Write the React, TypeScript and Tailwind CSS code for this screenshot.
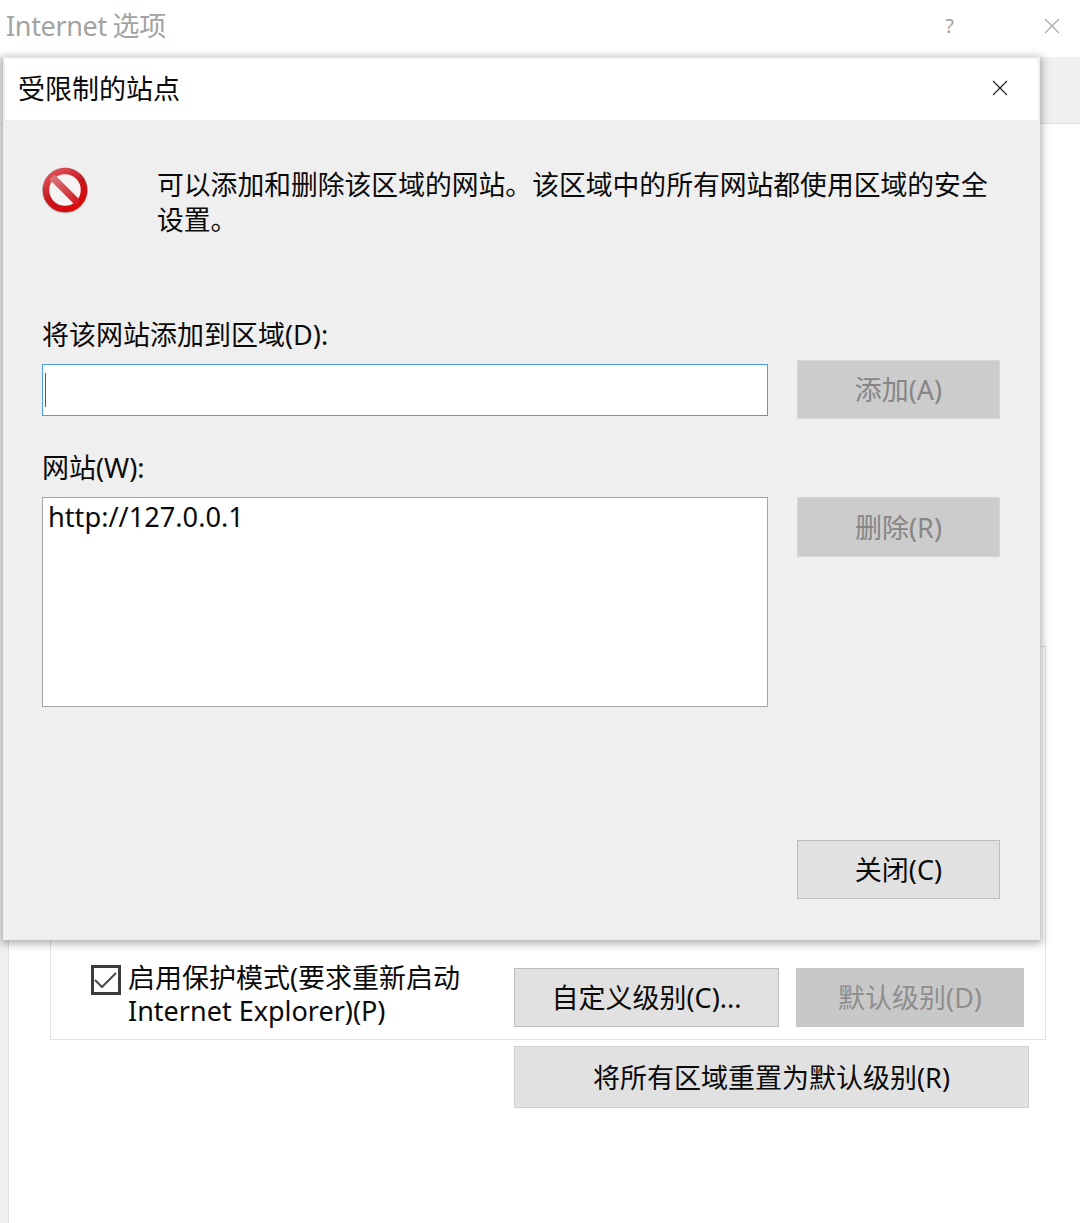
import React from 'react';

const font = '[font-family:"Noto_Sans","Noto_Sans_CJK_SC",sans-serif]';

// Flat Win10 dialog button, disabled variant is darker grey with muted text
const DlgButton: React.FC<{ label: string; disabled?: boolean; className?: string }> = ({ label, disabled, className }) => (
  <div
    className={`flex items-center justify-center border pt-[2px] text-[27px] ${
      disabled
        ? 'border-[#d6d6d6] bg-[#cccccc] text-[#868686]'
        : 'border-[#bdbdbd] bg-[#e1e1e1] text-[#0a0a0a]'
    } ${className ?? ''}`}
  >
    {label}
  </div>
);

const CloseIcon: React.FC<{ size: number; color: string; className?: string }> = ({ size, color, className }) => (
  <svg className={className} width={size} height={size} viewBox="0 0 16 16" fill="none" stroke={color} strokeWidth="1.1">
    <path d="M1 1 L15 15 M15 1 L1 15" />
  </svg>
);

const BlockedIcon: React.FC = () => (
  <svg width="48" height="48" viewBox="0 0 48 48">
    <defs>
      <linearGradient id="ring" x1="0.2" y1="0" x2="0.8" y2="1">
        <stop offset="0" stopColor="#de5056" />
        <stop offset="0.5" stopColor="#c4181f" />
        <stop offset="1" stopColor="#dc0808" />
      </linearGradient>
      <linearGradient id="bar" x1="0" y1="0" x2="1" y2="1">
        <stop offset="0" stopColor="#d9777c" />
        <stop offset="1" stopColor="#cf1a1e" />
      </linearGradient>
    </defs>
    <circle cx="24" cy="24.5" r="23" fill="#8c8c8c" opacity="0.55" />
    <circle cx="24" cy="24" r="19" fill="#f4f4f4" stroke="url(#ring)" strokeWidth="6.5" />
    <path d="M11 11 L37 37" stroke="url(#bar)" strokeWidth="7" />
  </svg>
);

export default function App() {
  return (
    <div className={`relative flex h-[1223px] w-[1080px] flex-col overflow-hidden bg-white ${font}`}>
      {/* Parent window behind the dialog */}
      <div className="flex h-[57px] items-center justify-between pb-[5px] pl-[6px] pr-[20px]">
        <span className="text-[27px] tracking-[-0.35px] text-[#a3a3a3] [word-spacing:-1px]">Internet 选项</span>
        <div className="flex items-center gap-[90px]">
          <span className="text-[20px] text-[#a0a0a0]">?</span>
          <CloseIcon size={16} color="#a8a8a8" />
        </div>
      </div>
      <div className="h-[67px] border-b border-[#dedede] bg-[#f0f0f0]" />
      <div className="flex flex-1">
        <div className="w-[9px] border-r border-[#e0e0e0] bg-[#f0f0f0]" />
        <div className="flex flex-col pl-[41px] pt-[522px]">
          <div className="flex h-[394px] w-[996px] flex-col justify-end border border-[#e3e3e3] pb-[12px] pl-[40px] pr-[21px]">
            <div className="flex justify-between">
              <div className="flex w-[420px] text-[27px] leading-[33px] text-[#0a0a0a]">
                <div className="mr-[7px] mt-[5px] flex h-[30px] w-[30px] shrink-0 items-center justify-center border-[3px] border-[#3c3c3c] bg-white">
                  <svg width="24" height="24" viewBox="0 0 24 24" fill="none" stroke="#4a4a4a" strokeWidth="2">
                    <path d="M1 12 L8 19 L22 5" />
                  </svg>
                </div>
                <div className="mt-[1px] whitespace-nowrap">
                  启用保护模式(要求重新启动
                  <br />
                  Internet Explorer)(P)
                </div>
              </div>
              <div className="mt-[8px] flex gap-[17px]">
                <DlgButton label="自定义级别(C)..." className="h-[59px] w-[265px]" />
                <DlgButton label="默认级别(D)" disabled className="h-[59px] w-[228px] !border-[#c8c8c8] !bg-[#c8c8c8] !text-[#8e8e8e]" />
              </div>
            </div>
          </div>
          <DlgButton label="将所有区域重置为默认级别(R)" className="ml-[464px] mt-[6px] h-[62px] w-[515px] !border-[#d0d0d0]" />
        </div>
      </div>

      {/* Modal dialog on top */}
      <div className="absolute left-[3px] top-[57px] flex h-[883px] w-[1037px] flex-col bg-[#efefef] shadow-[0_2px_8px_2px_rgba(0,0,0,0.3)]">
        <div className="mx-[2px] mt-[2px] flex h-[61px] shrink-0 items-center justify-between bg-white pl-[13px] pr-[30px]">
          <span className="text-[27px] text-[#0a0a0a]">受限制的站点</span>
          <CloseIcon size={16} color="#1a1a1a" className="mb-[3px]" />
        </div>
        <div className="flex flex-1 flex-col pl-[39px] pr-[40px] text-[#0a0a0a]">
          <div className="mt-[47px] flex">
            <div className="ml-[-1px] mt-[-1px] w-[116px] shrink-0">
              <BlockedIcon />
            </div>
            <p className="w-[840px] text-[26.8px] leading-[35px]">
              可以添加和删除该区域的网站。该区域中的所有网站都使用区域的安全设置。
            </p>
          </div>
          <div className="mt-[80px] text-[27px] leading-[35px]">将该网站添加到区域(D):</div>
          <div className="mt-[8px] flex items-start justify-between">
            <div className="mt-[4px] flex h-[52px] w-[726px] items-center border border-[#4a9ee0] bg-white pl-[2px]">
              <div className="h-[34px] w-px bg-[#555555]" />
            </div>
            <DlgButton label="添加(A)" disabled className="h-[59px] w-[203px]" />
          </div>
          <div className="mt-[31px] text-[27px] leading-[35px]">网站(W):</div>
          <div className="mt-[12px] flex items-start justify-between">
            <div className="h-[210px] w-[726px] border border-[#a6a6a6] bg-white pl-[5px] text-[27.2px] leading-[38px]">
              http://127.0.0.1
            </div>
            <DlgButton label="删除(R)" disabled className="h-[60px] w-[203px]" />
          </div>
          <div className="mt-[133px] flex justify-end">
            <DlgButton label="关闭(C)" className="h-[59px] w-[203px]" />
          </div>
        </div>
      </div>
    </div>
  );
}
